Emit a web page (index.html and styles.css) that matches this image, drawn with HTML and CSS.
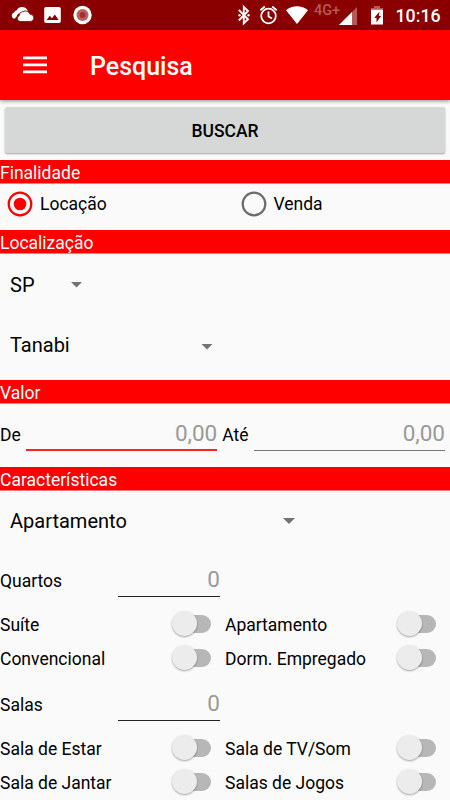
FILE: index.html
```html
<!DOCTYPE html>
<html lang="pt-BR">
<head>
<meta charset="utf-8">
<title>Pesquisa</title>
<link rel="stylesheet" href="styles.css">
</head>
<body>
<div class="status">
  <svg class="status-icons" width="390" height="30" viewBox="0 0 390 30" fill="#fff">
    <path d="M14.500 18.800a3.300 3.300 0 0 1-.5-6.400 4 4 0 0 1 2.800-2.200 6 6 0 0 1 11.200 1.600 5.500 5.500 0 0 0-7 1.200 5 5 0 0 0-4.500 3.800z"/>
    <path d="M20 21.500a3 3 0 0 1-.8-5.800 4 4 0 0 1 3.700-4.100 5 5 0 0 1 7.200 2.700 3.600 3.600 0 0 1 .2 7.200z" stroke="#8a0000" stroke-width=".8"/>
    <path fill-rule="evenodd" d="M46 7h13a1.800 1.800 0 0 1 1.800 1.800v12.400A1.800 1.800 0 0 1 59 23H46a1.800 1.800 0 0 1-1.800-1.800V8.800A1.800 1.800 0 0 1 46 7zM46.600 20h12l-3.800-5.500-2.800 3.800-2.200-2.500z"/>
    <circle cx="82.500" cy="15" r="9.200"/><circle cx="82.500" cy="15" r="6" fill="#ba6262"/><circle cx="82.500" cy="15" r="3" fill="#a52e2e"/>
    <path d="M238.800 9.800l9.200 9.500-4.200 4V7l4.200 4-9.200 9.500" fill="none" stroke="#fff" stroke-width="1.900"/>
    <circle cx="239.500" cy="15.200" r="1.200"/><circle cx="248.500" cy="15.200" r="1.200"/>
    <g fill="none" stroke="#fff" stroke-width="1.800"><circle cx="268.500" cy="16" r="7.300"/><path d="M268.500 11.500v5l3.500 2.100M260.300 10.200l4.500-3.700M276.700 10.200l-4.500-3.700"/></g>
    <path d="M286 10.300a17 17 0 0 1 22 0L297 24z"/>
    <path d="M339 25L357 7v18z" opacity=".35"/><path d="M352 11.900V25h-13z"/>
    <path d="M371 9V8h3V6h6v2h3v1z" opacity=".35"/>
    <path fill-rule="evenodd" d="M371 9.500h12v15h-12zM379.500 11.500l-5.300 6.500h2.300v4.500l4.600-6.500h-2.300z"/>
  </svg>
  <span class="network">4G+</span>
  <span class="clock">10:16</span>
</div>
<header class="appbar">
  <svg width="24" height="18" viewBox="0 0 24 18" fill="#fff"><path d="M0 .5h24v2.700H0zM0 7.500h24v2.700H0zM0 14.500h24v2.700H0z"/></svg>
  <h1>Pesquisa</h1>
</header>
<main>
  <button class="search">BUSCAR</button>
  <h2>Finalidade</h2>
  <div class="radios">
    <label><svg width="26" height="26" viewBox="0 0 26 26"><circle cx="13" cy="13" r="11.300" fill="none" stroke="#f00" stroke-width="2.200"/><circle cx="13" cy="13" r="6.300" fill="#f00"/></svg><span>Locação</span></label>
    <label><svg width="26" height="26" viewBox="0 0 26 26"><circle cx="13" cy="13" r="11.300" fill="none" stroke="#6b6b6b" stroke-width="2.200"/></svg><span>Venda</span></label>
  </div>
  <h2>Localização</h2>
  <div class="spinner state"><span>SP</span><i class="caret"></i></div>
  <div class="spinner city"><span>Tanabi</span><i class="caret"></i></div>
  <h2>Valor</h2>
  <div class="range">
    <span class="from">De</span><div class="field focus">0,00</div>
    <span class="to">Até</span><div class="field">0,00</div>
  </div>
  <h2>Características</h2>
  <div class="spinner kind"><span>Apartamento</span><i class="caret"></i></div>
  <div class="count"><span>Quartos</span><div class="field">0</div></div>
  <div class="switches">
    <div class="switch"><span>Suíte</span><i class="toggle"></i></div>
    <div class="switch"><span>Apartamento</span><i class="toggle"></i></div>
    <div class="switch"><span>Convencional</span><i class="toggle"></i></div>
    <div class="switch"><span>Dorm. Empregado</span><i class="toggle"></i></div>
  </div>
  <div class="count"><span>Salas</span><div class="field">0</div></div>
  <div class="switches">
    <div class="switch"><span>Sala de Estar</span><i class="toggle"></i></div>
    <div class="switch"><span>Sala de TV/Som</span><i class="toggle"></i></div>
    <div class="switch"><span>Sala de Jantar</span><i class="toggle"></i></div>
    <div class="switch"><span>Salas de Jogos</span><i class="toggle"></i></div>
  </div>
</main>
</body>
</html>
```
FILE: styles.css
```css
* { box-sizing: border-box; }
body {
  margin: 0;
  height: 800px;
  overflow: hidden;
  background: #fafafa;
  color: #000;
  font: 17.5px/24px Roboto, sans-serif;
}
.status {
  display: flex;
  position: relative;
  height: 30px;
  background: #8a0000;
  color: #fff;
}
.status-icons { flex: none; }
.network {
  position: absolute;
  left: 314px;
  top: 3px;
  font-size: 14.5px;
  line-height: 16px;
  font-weight: 500;
  color: #b45a5a;
}
.clock {
  margin-left: 5.5px;
  font-size: 17.8px;
  line-height: 32px;
  font-weight: 500;
}
.appbar {
  position: relative;
  display: flex;
  align-items: center;
  gap: 43px;
  height: 70px;
  padding-left: 23px;
  background: #f00;
  color: #fff;
  box-shadow: 0 1px 4px rgba(0, 0, 0, .45);
}
h1 { margin: 3px 0 0; font-size: 25px; line-height: 30px; font-weight: 500; }
main { display: flex; flex-direction: column; padding-top: 7px; }
.search {
  height: 46px;
  margin: 0 5px 7px;
  padding: 1px 0 0;
  border: 0;
  border-radius: 2px;
  background: #d6d8d7;
  box-shadow: 0 1px 2px rgba(0, 0, 0, .35);
  color: #000;
  font: 500 17.5px/24px Roboto, sans-serif;
}
h2 {
  height: 24px;
  margin: 0;
  border-bottom: 1px solid #ff7a7a;
  background: #f00;
  color: #fff;
  font-size: 17.5px;
  line-height: 26px;
  font-weight: 400;
}
.radios { display: grid; grid-template-columns: 233.5px 1fr; height: 46px; padding-left: 7px; }
.radios label { display: flex; gap: 7px; height: 40px; align-items: center; }
.spinner { display: flex; align-items: center; justify-content: space-between; padding-left: 10px; font-size: 20px; }
.caret { width: 12px; height: 6px; background: #737373; clip-path: polygon(0 0, 100% 0, 50% 100%); }
.state { width: 82.5px; height: 61px; }
.city { width: 213px; height: 65px; padding-bottom: 6px; }
.city .caret { margin-top: 4px; }
.kind { width: 295px; height: 60px; }
.range { display: flex; height: 63px; padding: 18px 5px 0 0; }
.range span { line-height: 26px; }
.from { width: 26px; }
.to { width: 31.5px; margin-left: 5px; }
.field {
  flex: 1;
  height: 29px;
  border-bottom: 1px solid #777;
  color: #999;
  font-size: 22.5px;
  line-height: 22px;
  text-align: right;
}
.focus { border-bottom: 2px solid #f22; }
.count { display: flex; height: 56px; padding-top: 17px; }
.count span { width: 117.5px; line-height: 26px; }
.count .field { flex: none; width: 102.5px; border-color: #222; }
.switches { display: grid; grid-template-columns: 225px 225px; grid-auto-rows: 34px; }
.switch { display: flex; align-items: center; justify-content: space-between; padding-right: 14.5px; }
.switch span { margin-top: 1px; }
.toggle { display: flex; align-items: center; width: 37px; height: 17.5px; margin-top: -.5px; border-radius: 9px; background: #b7b7b7; }
.toggle::before {
  content: "";
  flex: none;
  width: 25px;
  height: 25px;
  margin-left: -2px;
  border-radius: 50%;
  background: #ececec;
  box-shadow: 0 1px 2px rgba(0, 0, 0, .35);
}
```
